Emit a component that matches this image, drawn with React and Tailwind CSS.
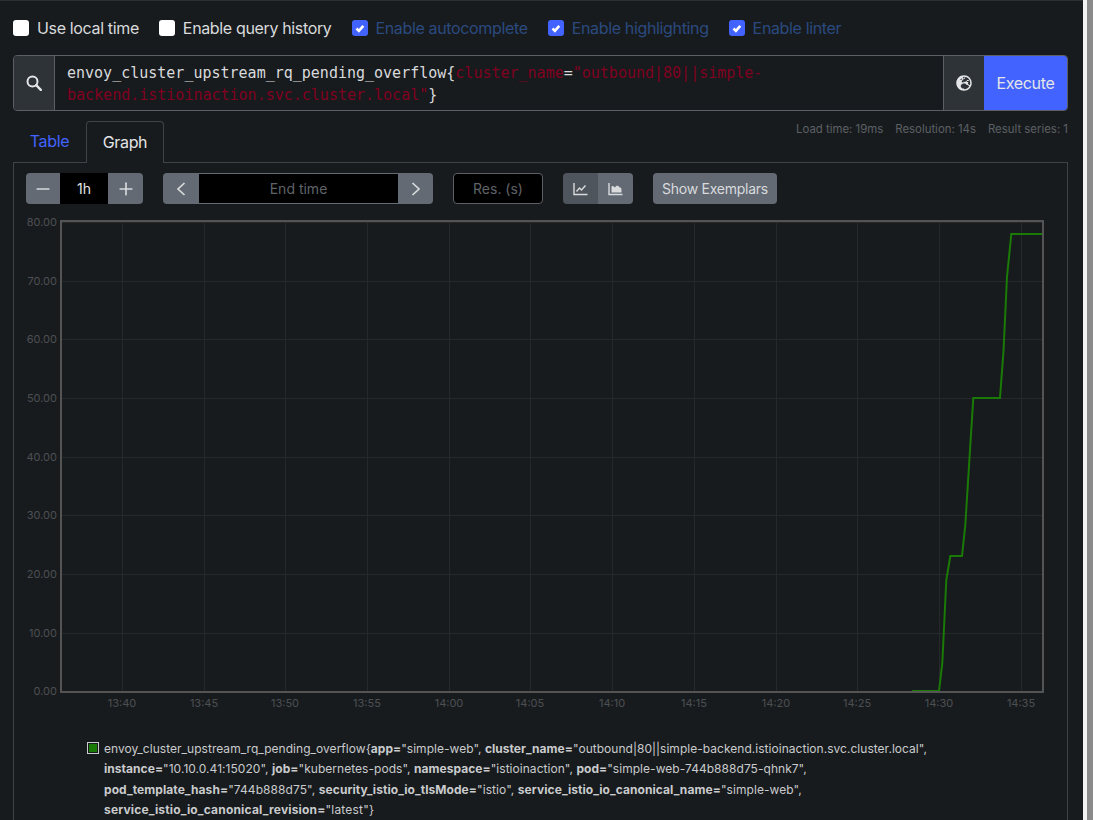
import { FaGlobeEurope } from 'react-icons/fa';
import { Minus, Plus } from 'lucide-react';

const sans = "font-['Inter','Liberation_Sans',sans-serif]";

const xTicks = [
  ['13:40', 122], ['13:45', 204], ['13:50', 285], ['13:55', 367], ['14:00', 449], ['14:05', 530],
  ['14:10', 612], ['14:15', 694], ['14:20', 776], ['14:25', 857], ['14:30', 939], ['14:35', 1021],
];
const yTicks = [
  ['80.00', 222], ['70.00', 281], ['60.00', 339], ['50.00', 398], ['40.00', 457],
  ['30.00', 515], ['20.00', 574], ['10.00', 633], ['0.00', 691],
];
const series = '912,691 939,691 942.3,663 946.3,580 950.3,556 962,556 965.3,525 970,450 973.3,398 1000,398 1003.5,351 1007,277 1011.3,234 1042,234';

const Check = ({ label, checked }) => (
  <label className="flex items-center gap-2">
    {checked ? (
      <span className="flex h-4 w-4 items-center justify-center rounded-[3px] bg-[#4263ff]">
        <svg viewBox="0 0 16 16" className="h-4 w-4" fill="none" stroke="#fff" strokeWidth="2.6">
          <path d="M4.5 8.5l2.4 2.4 4.4-5" />
        </svg>
      </span>
    ) : (
      <span className="h-4 w-4 rounded-[3px] bg-white" />
    )}
    <span className={checked ? 'text-[#2a4a7f]' : 'text-[#d8dadc]'}>{label}</span>
  </label>
);

const Label = ({ name, value, comma = true }) => (
  <>
    <b className="font-bold">{name}=</b>"{value}"{comma ? ', ' : ''}
  </>
);

const SearchIcon = () => (
  <svg viewBox="0 0 16 16" className="h-4 w-4" fill="none" stroke="currentColor">
    <circle cx="6.5" cy="6.5" r="5" strokeWidth="2" />
    <path d="M10.2 10.2l4.6 4.6" strokeWidth="2.4" strokeLinecap="round" />
  </svg>
);

const Chevron = ({ d }) => (
  <svg viewBox="0 0 10 14" className="h-[14px] w-[10px]" fill="none" stroke="currentColor" strokeWidth="1.7">
    <path d={d} />
  </svg>
);

const LineIcon = () => (
  <svg viewBox="0 0 15 14" className="h-[14px] w-[15px]" fill="none" stroke="currentColor">
    <path d="M1 1v11.5h13.5" strokeWidth="1.4" />
    <path d="M3.5 9.5L6.5 6l2 2 4-4.5" strokeWidth="1.4" />
  </svg>
);

const AreaIcon = () => (
  <svg viewBox="0 0 15 14" className="h-[14px] w-[15px]" fill="none" stroke="currentColor">
    <path d="M1 1v11.5h13.5" strokeWidth="1.4" />
    <path
      d="M3.5 10.5V5c0-1 1-1.4 1.8-.8l1.7 1.3c1-2.4 3.4-2.4 4.4-.3 1.2.2 2.1 1 2.1 2.2v3.1z"
      fill="currentColor"
      stroke="none"
    />
  </svg>
);

const Chart = () => (
  <svg viewBox="14 210 1053 520" className={`h-[520px] w-[1053px] ${sans}`}>
    {xTicks.map(([t, x]) => (
      <g key={t}>
        <line x1={x + 0.5} x2={x + 0.5} y1="222" y2="691" stroke="#26282a" />
        <text x={x} y="707" textAnchor="middle" fontSize="11" fill="#4c4f52">{t}</text>
      </g>
    ))}
    {yTicks.map(([t, y]) => (
      <g key={t}>
        <line x1="61" x2="1042" y1={y + 0.5} y2={y + 0.5} stroke="#26282a" />
        <text x="57" y={y + 4} textAnchor="end" fontSize="11" fill="#4c4f52">{t}</text>
      </g>
    ))}
    <polyline points={series} fill="none" stroke="#1a7a06" strokeWidth="2" />
    <rect x="61" y="221" width="982" height="471" fill="none" stroke="#545454" strokeWidth="2" />
  </svg>
);

export default function App() {
  return (
    <div className={`flex h-[820px] w-[1093px] overflow-hidden ${sans}`}>
      <main className="h-full w-[1083px] border-t border-t-[#2c2f33] bg-[#181b1e] px-[13px] pt-[19px] text-[#d8dadc]">
        <div className="flex h-4 items-center gap-5 text-base tracking-[-0.35px]">
          <Check label="Use local time" />
          <Check label="Enable query history" />
          <Check label="Enable autocomplete" checked />
          <Check label="Enable highlighting" checked />
          <Check label="Enable linter" checked />
        </div>

        <div className="mt-[19px] flex h-14 w-[1055px] overflow-hidden rounded border border-[#5c6066]">
          <div className="flex w-[41px] items-center justify-center border-r border-[#5c6066] bg-[#2e3338] text-[#e4e5e6]">
            <SearchIcon />
          </div>
          <div className="flex-1 px-3 pt-[6px] font-['DejaVu_Sans_Mono',monospace] text-[15px] leading-[22px] text-[#d8dadc]">
            envoy_cluster_upstream_rq_pending_overflow{'{'}
            <span className="text-[#800020]">cluster_name</span>=
            <span className="text-[#800020]">"outbound|80||simple-</span>
            <br />
            <span className="text-[#800020]">backend.istioinaction.svc.cluster.local"</span>
            {'}'}
          </div>
          <div className="flex w-[41px] items-center justify-center border-l border-[#5c6066] bg-[#2e3338] text-[#e4e5e6]">
            <FaGlobeEurope size={16} />
          </div>
          <div className="flex w-[83px] items-center justify-center bg-[#4263ff] text-base tracking-[-0.35px] text-[#e4e5e6]">Execute</div>
        </div>

        <div className="mt-[10px] flex h-[42px] w-[1055px] justify-between">
          <div className="flex text-base tracking-[-0.35px]">
            <div className="flex w-[73px] items-center justify-center pb-[2px] text-[#4263ff]">Table</div>
            <div className="z-10 flex h-[42px] w-[78px] items-center justify-center rounded-t border border-b-0 border-[#3f4347] bg-[#181b1e] pb-[2px] text-[#e4e5e6]">Graph</div>
          </div>
          <div className="flex gap-3 text-[11.4px] text-[#5c6064]">
            <span>Load time: 19ms</span>
            <span>Resolution: 14s</span>
            <span>Result series: 1</span>
          </div>
        </div>

        <section className="-mt-px h-[700px] w-[1055px] border border-[#3f4347] pt-[10px]">
          <div className="flex h-[31px] items-stretch pl-3 text-sm">
            <div className="flex w-[117px] overflow-hidden rounded">
              <div className="flex w-[34px] items-center justify-center bg-[#636a74] text-[#d8dadc]"><Minus size={20} /></div>
              <div className="flex w-[48px] items-center justify-center bg-black text-[#e4e5e6]">1h</div>
              <div className="flex w-[35px] items-center justify-center bg-[#636a74] text-[#d8dadc]"><Plus size={20} /></div>
            </div>
            <div className="ml-5 flex w-[270px] overflow-hidden rounded">
              <div className="flex w-[36px] items-center justify-center bg-[#636a74] text-[#d8dadc]"><Chevron d="M8.5 1L2 7l6.5 6" /></div>
              <div className="flex w-[199px] items-center justify-center border-y border-[#636a74] bg-black text-[#5f6368]">End time</div>
              <div className="flex w-[35px] items-center justify-center bg-[#636a74] text-[#d8dadc]"><Chevron d="M1.5 1L8 7l-6.5 6" /></div>
            </div>
            <div className="ml-5 flex w-[90px] items-center justify-center rounded border border-[#5c6066] bg-black text-[#5f6368]">Res. (s)</div>
            <div className="ml-5 flex w-[70px] overflow-hidden rounded">
              <div className="flex w-[35px] items-center justify-center bg-[#4f555c] text-[#d8dadc]"><LineIcon /></div>
              <div className="flex w-[35px] items-center justify-center bg-[#636a74] text-[#d8dadc]"><AreaIcon /></div>
            </div>
            <div className="ml-5 flex w-[124px] items-center justify-center rounded bg-[#636a74] tracking-[-0.25px] text-[#d8dadc]">Show Exemplars</div>
          </div>

          <div className="mt-[6px]">
            <Chart />
          </div>

          <div className="mt-[9px] flex gap-[5px] pl-[73px] text-xs leading-[20.4px] text-[#c9cbcd]">
            <span className="mt-[3px] flex h-3 w-3 shrink-0 items-center justify-center border border-[#c9cbcd]">
              <span className="h-2 w-2 bg-[#1a7a06]" />
            </span>
            <div className="w-[860px]">
              <div className="tracking-[0.03px]">
                envoy_cluster_upstream_rq_pending_overflow{'{'}
                <Label name="app" value="simple-web" />
                <Label name="cluster_name" value="outbound|80||simple-backend.istioinaction.svc.cluster.local" />
              </div>
              <div className="tracking-[0.04px]">
                <Label name="instance" value="10.10.0.41:15020" />
                <Label name="job" value="kubernetes-pods" />
                <Label name="namespace" value="istioinaction" />
                <Label name="pod" value="simple-web-744b888d75-qhnk7" />
              </div>
              <div className="tracking-[0.07px]">
                <Label name="pod_template_hash" value="744b888d75" />
                <Label name="security_istio_io_tlsMode" value="istio" />
                <Label name="service_istio_io_canonical_name" value="simple-web" />
              </div>
              <div className="tracking-[0.18px]">
                <Label name="service_istio_io_canonical_revision" value="latest" comma={false} />
                {'}'}
              </div>
            </div>
          </div>
        </section>
      </main>
      <div className="h-full w-[4px] bg-[#f2f2f2]" />
      <div className="h-full w-[6px] bg-[#8a8a8a]" />
    </div>
  );
}
